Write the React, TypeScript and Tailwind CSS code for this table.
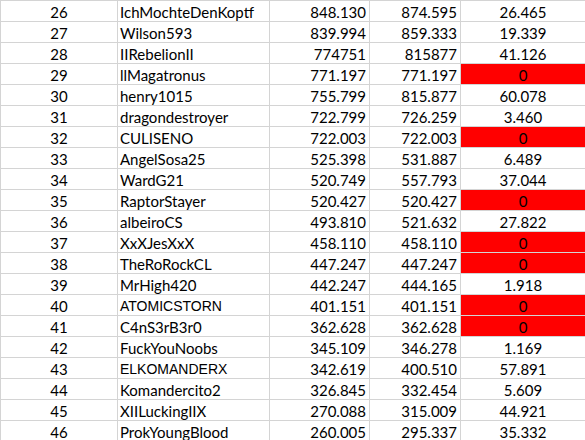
const rows: [number, string, string, string, string, boolean?][] = [
  [26, "IchMochteDenKoptf", "848.130", "874.595", "26.465"],
  [27, "Wilson593", "839.994", "859.333", "19.339"],
  [28, "IIRebelionII", "774751", "815877", "41.126"],
  [29, "llMagatronus", "771.197", "771.197", "0"],
  [30, "henry1015", "755.799", "815.877", "60.078"],
  [31, "dragondestroyer", "722.799", "726.259", "3.460"],
  [32, "CULISENO", "722.003", "722.003", "0"],
  [33, "AngelSosa25", "525.398", "531.887", "6.489"],
  [34, "WardG21", "520.749", "557.793", "37.044"],
  [35, "RaptorStayer", "520.427", "520.427", "0"],
  [36, "albeiroCS", "493.810", "521.632", "27.822"],
  [37, "XxXJesXxX", "458.110", "458.110", "0"],
  [38, "TheRoRockCL", "447.247", "447.247", "0"],
  [39, "MrHigh420", "442.247", "444.165", "1.918"],
  [40, "ATOMICSTORN", "401.151", "401.151", "0", true],
  [41, "C4nS3rB3r0", "362.628", "362.628", "0"],
  [42, "FuckYouNoobs", "345.109", "346.278", "1.169"],
  [43, "ELKOMANDERX", "342.619", "400.510", "57.891", true],
  [44, "Komandercito2", "326.845", "332.454", "5.609"],
  [45, "XIILuckingIIX", "270.088", "315.009", "44.921"],
  [46, "ProkYoungBlood", "260.005", "295.337", "35.332"],
];

export default function App() {
  return (
    <div className="w-[585px] h-[440px] overflow-hidden bg-white">
      <div
        className="grid grid-cols-[116px_151px_99px_90px_1fr] auto-rows-[20px] gap-px bg-[#d4d4d4] pl-px pt-px text-[15px] text-black"
        style={{ fontFamily: "Lato, 'Open Sans', sans-serif" }}
      >
        {rows.map(([n, name, a, b, diff, arial]) => (
          <div key={n} className="contents">
            <div className="bg-white flex items-center justify-center pt-0.5">{n}</div>
            <div
              className={
                arial
                  ? "bg-white flex items-center pl-[2px] pt-0.5 text-[14px] font-['Liberation_Sans',sans-serif]"
                  : "bg-white flex items-center pl-[2px] pt-0.5"
              }
            >
              {name}
            </div>
            <div className="bg-white flex items-center justify-end pr-[3px] pt-0.5">{a}</div>
            <div className="bg-white flex items-center justify-end pr-[3px] pt-0.5">{b}</div>
            <div
              className={
                diff === "0"
                  ? "bg-[#ff0000] flex items-center justify-center pt-0.5"
                  : "bg-white flex items-center justify-center pt-0.5"
              }
            >
              {diff}
            </div>
          </div>
        ))}
      </div>
    </div>
  );
}
